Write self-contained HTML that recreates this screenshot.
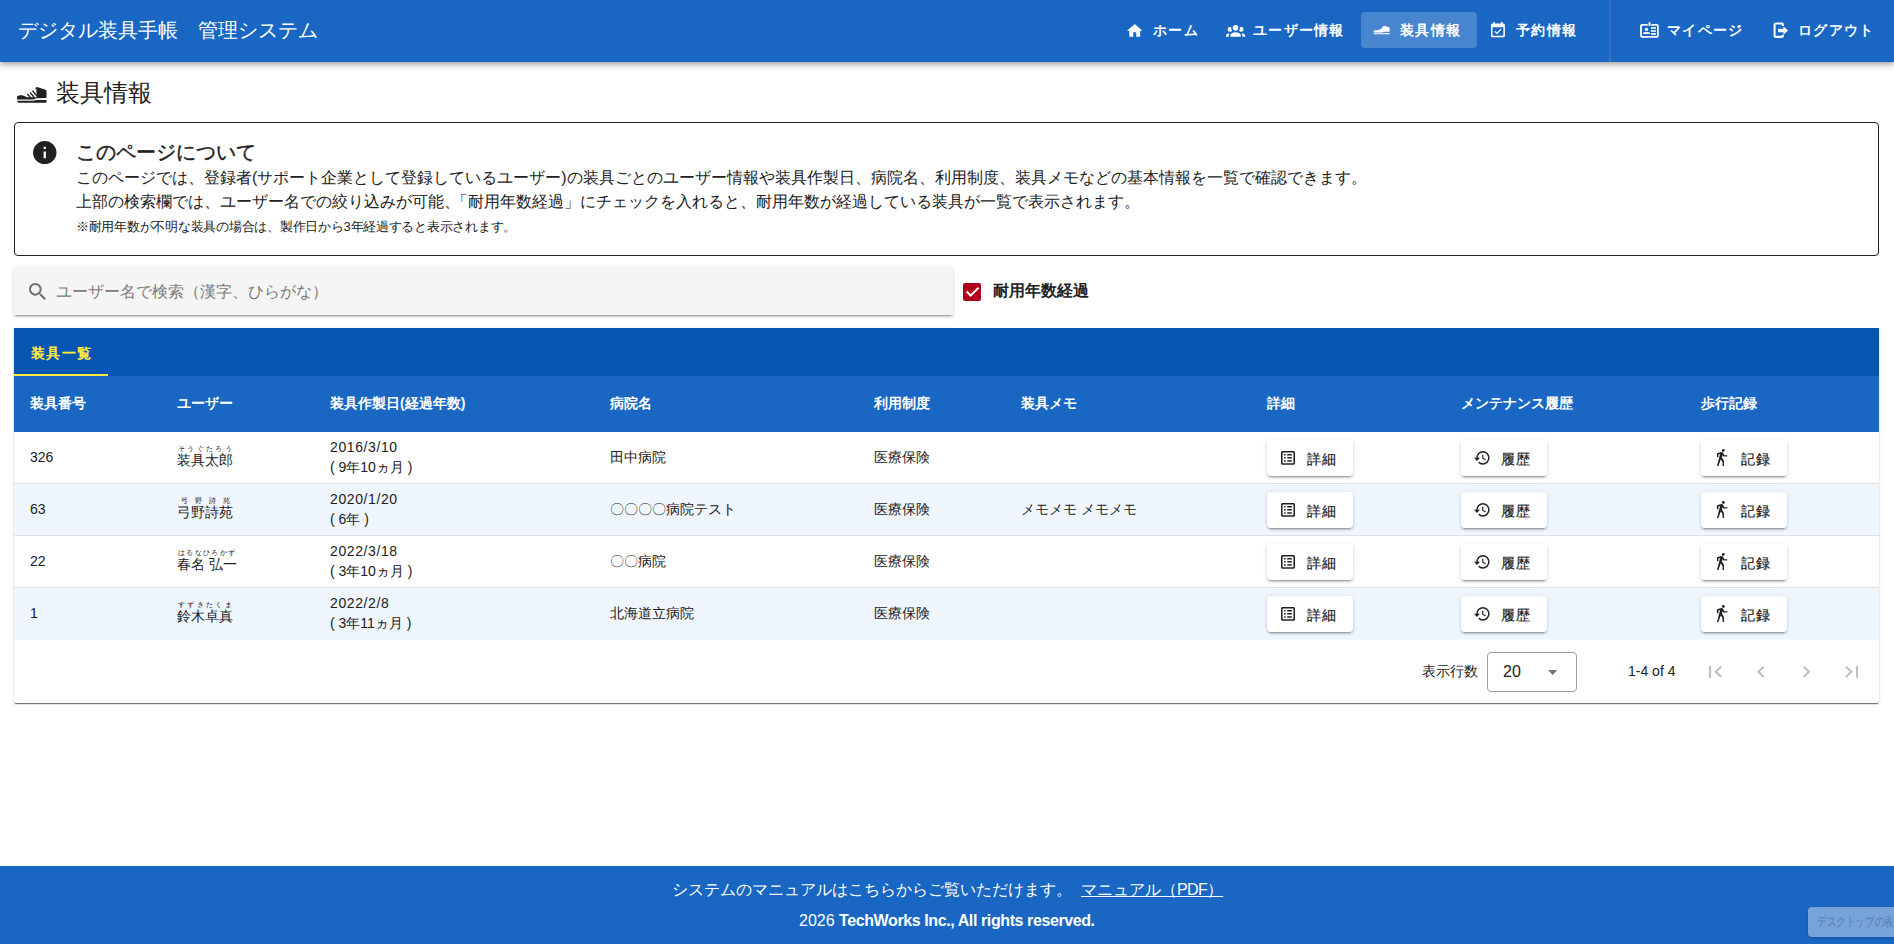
<!DOCTYPE html>
<html lang="ja"><head><meta charset="utf-8"><title>装具情報</title>
<style>
*{box-sizing:border-box}
html,body{margin:0;padding:0}
body{width:1894px;height:944px;position:relative;overflow:hidden;background:#fff;font-family:"Liberation Sans",sans-serif;color:#212121}
.abs{position:absolute}
svg{display:block;overflow:visible}
.t{position:absolute;white-space:nowrap}
.appbar{left:0;top:0;width:1894px;height:62px;background:#1967c2;box-shadow:0 2px 4px -1px rgba(0,0,0,.2),0 4px 5px 0 rgba(0,0,0,.14),0 1px 10px 0 rgba(0,0,0,.12)}
.hdr{position:absolute;left:0;top:0;width:1894px;height:62px}
.apptitle{left:18px;top:16px;font-size:20px;line-height:28px;color:#fff}
.nav{color:#fff;font-size:14px;font-weight:bold;letter-spacing:1.25px;line-height:20px;top:20px}
.navbtn{left:1361px;top:12px;width:116px;height:36px;border-radius:4px;background:rgba(255,255,255,.2)}
.divider{left:1609px;top:0;width:2px;height:62px;background:rgba(140,140,140,.28)}
.ptitle{left:56px;top:78px;font-size:24px;line-height:30px;color:#212121}
.alert{left:14px;top:122px;width:1865px;height:134px;border:1px solid #212121;border-radius:4px}
.atitle{left:76px;top:139px;font-size:20px;line-height:26px;-webkit-text-stroke:0.4px #212121;color:#212121}
.atext{left:76px;top:166px;font-size:16px;line-height:24px;color:#212121}
.anote{left:76px;top:218px;font-size:13px;letter-spacing:-0.26px;line-height:18px;color:#212121}
.search{left:14px;top:267px;width:939px;height:48px;background:#f5f5f5;border-radius:4px 4px 1px 1px;box-shadow:0 3px 1px -2px rgba(0,0,0,.2),0 2px 2px 0 rgba(0,0,0,.14),0 1px 5px 0 rgba(0,0,0,.12)}
.ph{left:56px;top:281.5px;font-size:16px;line-height:20px;color:#7b7b7b}
.cb{left:963px;top:283px;width:18px;height:18px;border-radius:2px;background:#b00020}
.cblabel{left:993px;top:281px;font-size:16px;line-height:20px;font-weight:bold;color:#212121}
.table{left:14px;top:328px;width:1865px;height:375px;background:#fff;border-radius:0 0 2px 2px;box-shadow:0 2px 1px -1px rgba(0,0,0,.4),0 1px 1px 0 rgba(0,0,0,.2),0 1px 3px 0 rgba(0,0,0,.16)}
.tabbar{left:14px;top:328px;width:1865px;height:48px;background:#0757b2}
.tab{left:31px;top:343px;font-size:14px;font-weight:bold;letter-spacing:1.25px;line-height:20px;color:#ffeb3b}
.tabind{left:14px;top:374px;width:94px;height:2px;background:#ffeb3b}
.thead{left:14px;top:376px;width:1865px;height:56px;background:#1967c2}
.th{top:393px;font-size:14px;line-height:20px;font-weight:bold;color:#fff}
.row{left:14px;width:1865px;height:52px;border-bottom:1px solid #e0e0e0}
.alt{background:#eff6fe}
.td{font-size:14px;line-height:20px;color:#212121}
.ruby{font-size:7px;line-height:8px;color:#212121;display:flex;justify-content:space-around}
.btn{width:86px;height:36px;border-radius:4px;background:#fff;box-shadow:0 3px 1px -2px rgba(0,0,0,.2),0 2px 2px 0 rgba(0,0,0,.14),0 1px 5px 0 rgba(0,0,0,.12)}
.btxt{font-size:14px;line-height:20px;letter-spacing:1.25px;color:#212121;-webkit-text-stroke:0.2px #212121}
.sel{left:1487px;top:652px;width:90px;height:40px;border:1px solid #9e9e9e;border-radius:4px}
.footer{left:0;top:866px;width:1894px;height:78px;background:#1967c2}
.ft{color:#fff;font-size:16px;line-height:22px}
.deskbtn{left:1808px;top:907px;width:120px;height:30px;border-radius:4px;background:rgba(255,255,255,.4);box-shadow:0 1px 3px rgba(0,0,0,.2)}

</style></head>
<body>
<!-- App bar -->
<div class="abs appbar"></div>
<div class="hdr">
<div class="t apptitle">デジタル装具手帳　管理システム</div>
<div class="abs navbtn"></div>
<div class="abs divider"></div>
<svg class="abs" style="left:1127.0px;top:24.0px;width:15.5px;height:12.700000000000003px" viewBox="2 3 20 17" preserveAspectRatio="none"><path fill="#fff" d="M10,20V14H14V20H19V12H22L12,3L2,12H5V20H10Z"/></svg>
<div class="t nav" style="left:1153px">ホーム</div>
<svg class="abs" style="left:1225.8px;top:24.9px;width:19.200000000000045px;height:11.700000000000003px" viewBox="0 5.5 24 14.5" preserveAspectRatio="none"><path fill="#fff" d="M12,5.5A3.5,3.5 0 0,1 15.5,9A3.5,3.5 0 0,1 12,12.5A3.5,3.5 0 0,1 8.5,9A3.5,3.5 0 0,1 12,5.5M5,8C5.56,8 6.08,8.15 6.53,8.42C6.38,9.85 6.8,11.27 7.66,12.38C7.16,13.34 6.16,14 5,14A3,3 0 0,1 2,11A3,3 0 0,1 5,8M19,8A3,3 0 0,1 22,11A3,3 0 0,1 19,14C17.84,14 16.84,13.34 16.34,12.38C17.2,11.27 17.62,9.85 17.47,8.42C17.92,8.15 18.44,8 19,8M5.5,18.25C5.5,16.18 8.41,14.5 12,14.5C15.59,14.5 18.5,16.18 18.5,18.25V20H5.5V18.25M0,20V18.5C0,17.11 1.89,15.94 4.45,15.6C3.86,16.28 3.5,17.22 3.5,18.25V20H0M24,20H20.5V18.25C20.5,17.22 20.14,16.28 19.55,15.6C22.11,15.94 24,17.11 24,18.5V20Z"/></svg>
<div class="t nav" style="left:1253px">ユーザー情報</div>
<svg class="abs" style="left:1372.4px;top:22.2px;width:19.512px;height:15.176000000000002px" viewBox="0 0 36 28"><path fill="#fff" d="M3 19.6V17C3.3 15.7 5 15.2 7 15.2H9.8L13.05 14.1L16 12.8L18.1 11.1L20.8 7.7L22.5 7L24 7.3L31.5 9.8L32.5 10.6V18L23 18.2C21 18.5 20 19.6 18 19.6Z"/><line x1="13.6" y1="14.6" x2="15.6" y2="16.6" stroke="#4a87d0" stroke-width="0.9" opacity="0.6"/><line x1="16.3" y1="13.3" x2="18.3" y2="15.3" stroke="#4a87d0" stroke-width="0.9" opacity="0.6"/><line x1="18.6" y1="11.6" x2="20.6" y2="13.6" stroke="#4a87d0" stroke-width="0.9" opacity="0.6"/><path fill="#fff" d="M3.5 20.7H19C21 20.7 21.5 20.1 23.5 20.1H32.5V22.7H4.5C3.9 22.7 3.5 22.2 3.5 21.6Z"/></svg>
<div class="t nav" style="left:1400px">装具情報</div>
<svg class="abs" style="left:1491.1px;top:21.8px;width:13.900000000000091px;height:15.2px" viewBox="3 1 18 20" preserveAspectRatio="none"><path fill="#fff" d="M19,19H5V8H19M19,3H18V1H16V3H8V1H6V3H5C3.89,3 3,3.9 3,5V19A2,2 0 0,0 5,21H19A2,2 0 0,0 21,19V5A2,2 0 0,0 19,3M16.53,11.06L15.47,10L10.59,14.88L8.47,12.76L7.41,13.82L10.59,17L16.53,11.06Z"/></svg>
<div class="t nav" style="left:1516px">予約情報</div>
<svg class="abs" style="left:1635px;top:18px;width:28px;height:24px" viewBox="0 0 28 24">
 <rect x="6" y="6.9" width="16.9" height="12" rx="1.2" fill="none" stroke="#fff" stroke-width="1.8"/>
 <rect x="12.7" y="5" width="3.6" height="2.8" fill="#1967c2"/>
 <rect x="13.5" y="4.3" width="2" height="3.5" fill="#fff"/>
 <circle cx="11.45" cy="11.45" r="1.65" fill="#fff"/>
 <path d="M8.1 15.9V15C8.1 14.5 9.5 14.1 11.45 14.1C13.4 14.1 14.8 14.5 14.8 15V15.9Z" fill="#fff"/>
 <rect x="15.9" y="9.2" width="5" height="1.6" fill="#fff"/>
 <rect x="15.9" y="12.2" width="5" height="1.6" fill="#fff"/>
 <rect x="15.9" y="15.1" width="5" height="1.7" fill="#fff"/>
</svg>
<div class="t nav" style="left:1667px">マイページ</div>
<svg class="abs" style="left:1765px;top:15px;width:30px;height:30px" viewBox="0 0 30 30">
 <path fill="#fff" d="M17 7.5H10.6C9.5 7.5 8.6 8.4 8.6 9.5V20.9C8.6 22 9.5 22.9 10.6 22.9H17C18 22.9 18.9 22 18.9 20.9V19.7H16.8V20.8H10.6V9.5H16.8V11H18.9V9.5C18.9 8.4 18 7.5 17 7.5Z"/>
 <path fill="#fff" d="M13 13.7H18.5V11.2L23 15.5L18.5 19.8V17.3H13Z"/>
</svg>
<div class="t nav" style="left:1798px">ログアウト</div>
</div>

<!-- page title -->
<svg class="abs" style="left:14.0px;top:80.0px;width:36.0px;height:28.0px" viewBox="0 0 36 28"><path fill="#212121" d="M3 19.6V17C3.3 15.7 5 15.2 7 15.2H8.2L13.4 17.2H22.5V12.8L22.3 9.1L21.1 8.2L22.8 7.1L24 7.2L31.5 9.8L32.5 10.6V18L23 18.2C21 18.5 20 19.6 18 19.6Z"/><line x1="13.3" y1="14.0" x2="16.5" y2="17.6" stroke="#212121" stroke-width="1.4"/><line x1="16.1" y1="12.5" x2="20.1" y2="17.4" stroke="#212121" stroke-width="1.4"/><line x1="18.5" y1="10.8" x2="22.6" y2="15.6" stroke="#212121" stroke-width="1.4"/><path fill="#212121" d="M3.5 20.7H19C21 20.7 21.5 20.1 23.5 20.1H32.5V22.7H4.5C3.9 22.7 3.5 22.2 3.5 21.6Z"/></svg>
<div class="t ptitle">装具情報</div>

<!-- alert -->
<div class="abs alert"></div>
<svg class="abs" style="left:33.2px;top:140.9px;width:23.5px;height:23.099999999999994px" viewBox="2 2 20 20" preserveAspectRatio="none"><path fill="#212121" d="M13,9H11V7H13M13,17H11V11H13M12,2A10,10 0 0,0 2,12A10,10 0 0,0 12,22A10,10 0 0,0 22,12A10,10 0 0,0 12,2Z"/></svg>
<div class="t atitle">このページについて</div>
<div class="t atext">このページでは、登録者(サポート企業として登録しているユーザー)の装具ごとのユーザー情報や装具作製日、病院名、利用制度、装具メモなどの基本情報を一覧で確認できます。<br>上部の検索欄では、ユーザー名での絞り込みが可能、<span style="margin-left:-8px">「</span>耐用年数経過」にチェックを入れると、耐用年数が経過している装具が一覧で表示されます。</div>
<div class="t anote">※耐用年数が不明な装具の場合は、製作日から3年経過すると表示されます。</div>

<!-- search -->
<div class="abs search"></div>
<svg class="abs" style="left:29.0px;top:283.0px;width:17.0px;height:17.0px" viewBox="3 3 17.5 17.5" preserveAspectRatio="none"><path fill="#6e6e6e" d="M9.5,3A6.5,6.5 0 0,1 16,9.5C16,11.11 15.41,12.59 14.44,13.73L14.71,14H15.5L20.5,19L19,20.5L14,15.5V14.71L13.73,14.44C12.59,15.41 11.11,16 9.5,16A6.5,6.5 0 0,1 3,9.5A6.5,6.5 0 0,1 9.5,3M9.5,5C7,5 5,7 5,9.5C5,12 7,14 9.5,14C12,14 14,12 14,9.5C14,7 12,5 9.5,5Z"/></svg>
<div class="t ph">ユーザー名で検索（漢字、ひらがな）</div>
<div class="abs cb"></div>
<svg class="abs" style="left:965.8px;top:286.9px;width:13.200000000000045px;height:10.100000000000023px" viewBox="5 6.58 14 10.42" preserveAspectRatio="none"><path fill="#fff" d="M10,17L5,12L6.41,10.58L10,14.17L17.59,6.58L19,8Z"/></svg>
<div class="t cblabel">耐用年数経過</div>

<!-- table -->
<div class="abs table"></div>
<div class="abs tabbar"></div>
<div class="t tab">装具一覧</div>
<div class="abs tabind"></div>
<div class="abs thead"></div>
<div class="t th" style="left:30px">装具番号</div>
<div class="t th" style="left:177px">ユーザー</div>
<div class="t th" style="left:330px">装具作製日(経過年数)</div>
<div class="t th" style="left:610px">病院名</div>
<div class="t th" style="left:874px">利用制度</div>
<div class="t th" style="left:1021px">装具メモ</div>
<div class="t th" style="left:1267px">詳細</div>
<div class="t th" style="left:1461px">メンテナンス履歴</div>
<div class="t th" style="left:1701px">歩行記録</div>
<div class="abs row" style="top:432px"></div>
<div class="t td" style="left:30px;top:446.5px">326</div>
<div class="abs ruby" style="left:177px;top:444.5px;width:56px"><span>そ</span><span>う</span><span>ぐ</span><span>た</span><span>ろ</span><span>う</span></div>
<div class="t td" style="left:177px;top:450px">装具太郎</div>
<div class="t td" style="left:330px;top:437px;letter-spacing:0.6px">2016/3/10</div>
<div class="t td" style="left:330px;top:457px">( 9年10ヵ月 )</div>
<div class="t td" style="left:610px;top:446.5px">田中病院</div>
<div class="t td" style="left:874px;top:446.5px">医療保険</div>
<div class="abs btn" style="left:1267px;top:440px"></div>
<svg class="abs" style="left:1281.0px;top:451.3px;width:14.0px;height:13.699999999999989px" viewBox="3 3 18 18" preserveAspectRatio="none"><path fill="#212121" d="M11 15H17V17H11V15M9 7H7V9H9V7M11 13H17V11H11V13M11 9H17V7H11V9M9 11H7V13H9V11M21 5V19C21 20.1 20.1 21 19 21H5C3.9 21 3 20.1 3 19V5C3 3.9 3.9 3 5 3H19C20.1 3 21 3.9 21 5M19 5H5V19H19V5M9 15H7V17H9V15Z"/></svg>
<div class="t btxt" style="left:1307px;top:448.5px">詳細</div>
<div class="abs btn" style="left:1461px;top:440px"></div>
<svg class="abs" style="left:1473.7px;top:451.1px;width:15.599999999999909px;height:13.699999999999989px" viewBox="1 3 21 18" preserveAspectRatio="none"><path fill="#212121" d="M13.5,8H12V13L16.28,15.54L17,14.33L13.5,12.25V8M13,3A9,9 0 0,0 4,12H1L4.96,16.03L9,12H6A7,7 0 0,1 13,5A7,7 0 0,1 20,12A7,7 0 0,1 13,19C11.07,19 9.32,18.21 8.06,16.94L6.64,18.36C8.27,20 10.5,21 13,21A9,9 0 0,0 22,12A9,9 0 0,0 13,3"/></svg>
<div class="t btxt" style="left:1501px;top:448.5px">履歴</div>
<div class="abs btn" style="left:1701px;top:440px"></div>
<svg class="abs" style="left:1716.9px;top:449.0px;width:10.299999999999955px;height:16.899999999999977px" viewBox="6 0.2 13 21.8" preserveAspectRatio="none"><path fill="#212121" d="M14.12,10H19V8.2H15.38L13.38,4.87C13.08,4.37 12.54,4.03 11.92,4.03C11.74,4.03 11.58,4.06 11.42,4.11L6,5.8V11H7.8V7.33L9.91,6.67L6,22H7.8L10.67,13.89L13,17V22H14.8V15.59L12.31,11.05L13.04,8.18M14,3.8C15,3.8 15.8,3 15.8,2C15.8,1 15,0.2 14,0.2C13,0.2 12.2,1 12.2,2C12.2,3 13,3.8 14,3.8Z"/></svg>
<div class="t btxt" style="left:1741px;top:448.5px">記録</div>
<div class="abs row alt" style="top:484px"></div>
<div class="t td" style="left:30px;top:498.5px">63</div>
<div class="abs ruby" style="left:177px;top:496.5px;width:56px"><span>弓</span><span>野</span><span>詩</span><span>苑</span></div>
<div class="t td" style="left:177px;top:502px">弓野詩苑</div>
<div class="t td" style="left:330px;top:489px;letter-spacing:0.6px">2020/1/20</div>
<div class="t td" style="left:330px;top:509px">( 6年 )</div>
<div class="t td" style="left:610px;top:498.5px">〇〇〇〇病院テスト</div>
<div class="t td" style="left:874px;top:498.5px">医療保険</div>
<div class="t td" style="left:1021px;top:498.5px">メモメモ メモメモ</div>
<div class="abs btn" style="left:1267px;top:492px"></div>
<svg class="abs" style="left:1281.0px;top:503.3px;width:14.0px;height:13.699999999999989px" viewBox="3 3 18 18" preserveAspectRatio="none"><path fill="#212121" d="M11 15H17V17H11V15M9 7H7V9H9V7M11 13H17V11H11V13M11 9H17V7H11V9M9 11H7V13H9V11M21 5V19C21 20.1 20.1 21 19 21H5C3.9 21 3 20.1 3 19V5C3 3.9 3.9 3 5 3H19C20.1 3 21 3.9 21 5M19 5H5V19H19V5M9 15H7V17H9V15Z"/></svg>
<div class="t btxt" style="left:1307px;top:500.5px">詳細</div>
<div class="abs btn" style="left:1461px;top:492px"></div>
<svg class="abs" style="left:1473.7px;top:503.1px;width:15.599999999999909px;height:13.699999999999932px" viewBox="1 3 21 18" preserveAspectRatio="none"><path fill="#212121" d="M13.5,8H12V13L16.28,15.54L17,14.33L13.5,12.25V8M13,3A9,9 0 0,0 4,12H1L4.96,16.03L9,12H6A7,7 0 0,1 13,5A7,7 0 0,1 20,12A7,7 0 0,1 13,19C11.07,19 9.32,18.21 8.06,16.94L6.64,18.36C8.27,20 10.5,21 13,21A9,9 0 0,0 22,12A9,9 0 0,0 13,3"/></svg>
<div class="t btxt" style="left:1501px;top:500.5px">履歴</div>
<div class="abs btn" style="left:1701px;top:492px"></div>
<svg class="abs" style="left:1716.9px;top:501.0px;width:10.299999999999955px;height:16.899999999999977px" viewBox="6 0.2 13 21.8" preserveAspectRatio="none"><path fill="#212121" d="M14.12,10H19V8.2H15.38L13.38,4.87C13.08,4.37 12.54,4.03 11.92,4.03C11.74,4.03 11.58,4.06 11.42,4.11L6,5.8V11H7.8V7.33L9.91,6.67L6,22H7.8L10.67,13.89L13,17V22H14.8V15.59L12.31,11.05L13.04,8.18M14,3.8C15,3.8 15.8,3 15.8,2C15.8,1 15,0.2 14,0.2C13,0.2 12.2,1 12.2,2C12.2,3 13,3.8 14,3.8Z"/></svg>
<div class="t btxt" style="left:1741px;top:500.5px">記録</div>
<div class="abs row" style="top:536px"></div>
<div class="t td" style="left:30px;top:550.5px">22</div>
<div class="abs ruby" style="left:177px;top:548.5px;width:59px"><span>は</span><span>る</span><span>な</span><span>ひ</span><span>ろ</span><span>か</span><span>ず</span></div>
<div class="t td" style="left:177px;top:554px">春名 弘一</div>
<div class="t td" style="left:330px;top:541px;letter-spacing:0.6px">2022/3/18</div>
<div class="t td" style="left:330px;top:561px">( 3年10ヵ月 )</div>
<div class="t td" style="left:610px;top:550.5px">〇〇病院</div>
<div class="t td" style="left:874px;top:550.5px">医療保険</div>
<div class="abs btn" style="left:1267px;top:544px"></div>
<svg class="abs" style="left:1281.0px;top:555.3px;width:14.0px;height:13.700000000000045px" viewBox="3 3 18 18" preserveAspectRatio="none"><path fill="#212121" d="M11 15H17V17H11V15M9 7H7V9H9V7M11 13H17V11H11V13M11 9H17V7H11V9M9 11H7V13H9V11M21 5V19C21 20.1 20.1 21 19 21H5C3.9 21 3 20.1 3 19V5C3 3.9 3.9 3 5 3H19C20.1 3 21 3.9 21 5M19 5H5V19H19V5M9 15H7V17H9V15Z"/></svg>
<div class="t btxt" style="left:1307px;top:552.5px">詳細</div>
<div class="abs btn" style="left:1461px;top:544px"></div>
<svg class="abs" style="left:1473.7px;top:555.1px;width:15.599999999999909px;height:13.699999999999932px" viewBox="1 3 21 18" preserveAspectRatio="none"><path fill="#212121" d="M13.5,8H12V13L16.28,15.54L17,14.33L13.5,12.25V8M13,3A9,9 0 0,0 4,12H1L4.96,16.03L9,12H6A7,7 0 0,1 13,5A7,7 0 0,1 20,12A7,7 0 0,1 13,19C11.07,19 9.32,18.21 8.06,16.94L6.64,18.36C8.27,20 10.5,21 13,21A9,9 0 0,0 22,12A9,9 0 0,0 13,3"/></svg>
<div class="t btxt" style="left:1501px;top:552.5px">履歴</div>
<div class="abs btn" style="left:1701px;top:544px"></div>
<svg class="abs" style="left:1716.9px;top:553.0px;width:10.299999999999955px;height:16.899999999999977px" viewBox="6 0.2 13 21.8" preserveAspectRatio="none"><path fill="#212121" d="M14.12,10H19V8.2H15.38L13.38,4.87C13.08,4.37 12.54,4.03 11.92,4.03C11.74,4.03 11.58,4.06 11.42,4.11L6,5.8V11H7.8V7.33L9.91,6.67L6,22H7.8L10.67,13.89L13,17V22H14.8V15.59L12.31,11.05L13.04,8.18M14,3.8C15,3.8 15.8,3 15.8,2C15.8,1 15,0.2 14,0.2C13,0.2 12.2,1 12.2,2C12.2,3 13,3.8 14,3.8Z"/></svg>
<div class="t btxt" style="left:1741px;top:552.5px">記録</div>
<div class="abs row alt" style="top:588px;border-bottom:0"></div>
<div class="t td" style="left:30px;top:602.5px">1</div>
<div class="abs ruby" style="left:177px;top:600.5px;width:56px"><span>す</span><span>ず</span><span>き</span><span>た</span><span>く</span><span>ま</span></div>
<div class="t td" style="left:177px;top:606px">鈴木卓真</div>
<div class="t td" style="left:330px;top:593px;letter-spacing:0.6px">2022/2/8</div>
<div class="t td" style="left:330px;top:613px">( 3年11ヵ月 )</div>
<div class="t td" style="left:610px;top:602.5px">北海道立病院</div>
<div class="t td" style="left:874px;top:602.5px">医療保険</div>
<div class="abs btn" style="left:1267px;top:596px"></div>
<svg class="abs" style="left:1281.0px;top:607.3px;width:14.0px;height:13.700000000000045px" viewBox="3 3 18 18" preserveAspectRatio="none"><path fill="#212121" d="M11 15H17V17H11V15M9 7H7V9H9V7M11 13H17V11H11V13M11 9H17V7H11V9M9 11H7V13H9V11M21 5V19C21 20.1 20.1 21 19 21H5C3.9 21 3 20.1 3 19V5C3 3.9 3.9 3 5 3H19C20.1 3 21 3.9 21 5M19 5H5V19H19V5M9 15H7V17H9V15Z"/></svg>
<div class="t btxt" style="left:1307px;top:604.5px">詳細</div>
<div class="abs btn" style="left:1461px;top:596px"></div>
<svg class="abs" style="left:1473.7px;top:607.1px;width:15.599999999999909px;height:13.699999999999932px" viewBox="1 3 21 18" preserveAspectRatio="none"><path fill="#212121" d="M13.5,8H12V13L16.28,15.54L17,14.33L13.5,12.25V8M13,3A9,9 0 0,0 4,12H1L4.96,16.03L9,12H6A7,7 0 0,1 13,5A7,7 0 0,1 20,12A7,7 0 0,1 13,19C11.07,19 9.32,18.21 8.06,16.94L6.64,18.36C8.27,20 10.5,21 13,21A9,9 0 0,0 22,12A9,9 0 0,0 13,3"/></svg>
<div class="t btxt" style="left:1501px;top:604.5px">履歴</div>
<div class="abs btn" style="left:1701px;top:596px"></div>
<svg class="abs" style="left:1716.9px;top:605.0px;width:10.299999999999955px;height:16.899999999999977px" viewBox="6 0.2 13 21.8" preserveAspectRatio="none"><path fill="#212121" d="M14.12,10H19V8.2H15.38L13.38,4.87C13.08,4.37 12.54,4.03 11.92,4.03C11.74,4.03 11.58,4.06 11.42,4.11L6,5.8V11H7.8V7.33L9.91,6.67L6,22H7.8L10.67,13.89L13,17V22H14.8V15.59L12.31,11.05L13.04,8.18M14,3.8C15,3.8 15.8,3 15.8,2C15.8,1 15,0.2 14,0.2C13,0.2 12.2,1 12.2,2C12.2,3 13,3.8 14,3.8Z"/></svg>
<div class="t btxt" style="left:1741px;top:604.5px">記録</div>
<!-- pagination -->
<div class="t td" style="left:1422px;top:661px">表示行数</div>
<div class="abs sel"></div>
<div class="t td" style="left:1503px;top:662px;font-size:16px">20</div>
<svg class="abs" style="left:1548px;top:670px;width:9.4px;height:5px" viewBox="0 0 10 5" preserveAspectRatio="none"><path d="M0 0H10L5 5Z" fill="#757575"/></svg>
<div class="t td" style="left:1628px;top:661px">1-4 of 4</div>
<svg class="abs" style="left:1709.0px;top:666.0px;width:13.0px;height:11.700000000000045px" viewBox="6 6 12.41 12" preserveAspectRatio="none"><path fill="#bdbdbd" d="M18.41,16.59L13.82,12L18.41,7.41L17,6L11,12L17,18L18.41,16.59M6,6H8V18H6V6Z"/></svg>
<svg class="abs" style="left:1757.0px;top:666.0px;width:7.400000000000091px;height:11.700000000000045px" viewBox="8 6 7.41 12" preserveAspectRatio="none"><path fill="#bdbdbd" d="M15.41,16.58L10.83,12L15.41,7.41L14,6L8,12L14,18L15.41,16.58Z"/></svg>
<svg class="abs" style="left:1802.6px;top:666.0px;width:7.400000000000091px;height:11.700000000000045px" viewBox="8.59 6 7.41 12" preserveAspectRatio="none"><path fill="#bdbdbd" d="M8.59,16.58L13.17,12L8.59,7.41L10,6L16,12L10,18L8.59,16.58Z"/></svg>
<svg class="abs" style="left:1845.4px;top:666.0px;width:13.199999999999818px;height:11.700000000000045px" viewBox="5.59 6 12.41 12" preserveAspectRatio="none"><path fill="#bdbdbd" d="M5.59,7.41L10.18,12L5.59,16.59L7,18L13,12L7,6L5.59,7.41M16,6H18V18H16V6Z"/></svg>

<!-- footer -->
<div class="abs footer"></div>
<div class="t ft" style="left:672px;top:878.5px">システムのマニュアルはこちらからご覧いただけます。</div>
<div class="t ft" style="left:1081px;top:879px;text-decoration:underline">マニュアル（<span style="letter-spacing:-0.6px">PDF</span>）</div>
<div class="t ft" style="left:799px;top:910px">2026 <b style="letter-spacing:-0.4px">TechWorks Inc., All rights reserved.</b></div>
<div class="abs deskbtn"></div>
<div class="t" style="left:1817px;top:913px;font-size:13px;line-height:18px;color:#5b7fa8;transform:scaleX(0.74);transform-origin:0 0">デスクトップの表示</div>

</body></html>
